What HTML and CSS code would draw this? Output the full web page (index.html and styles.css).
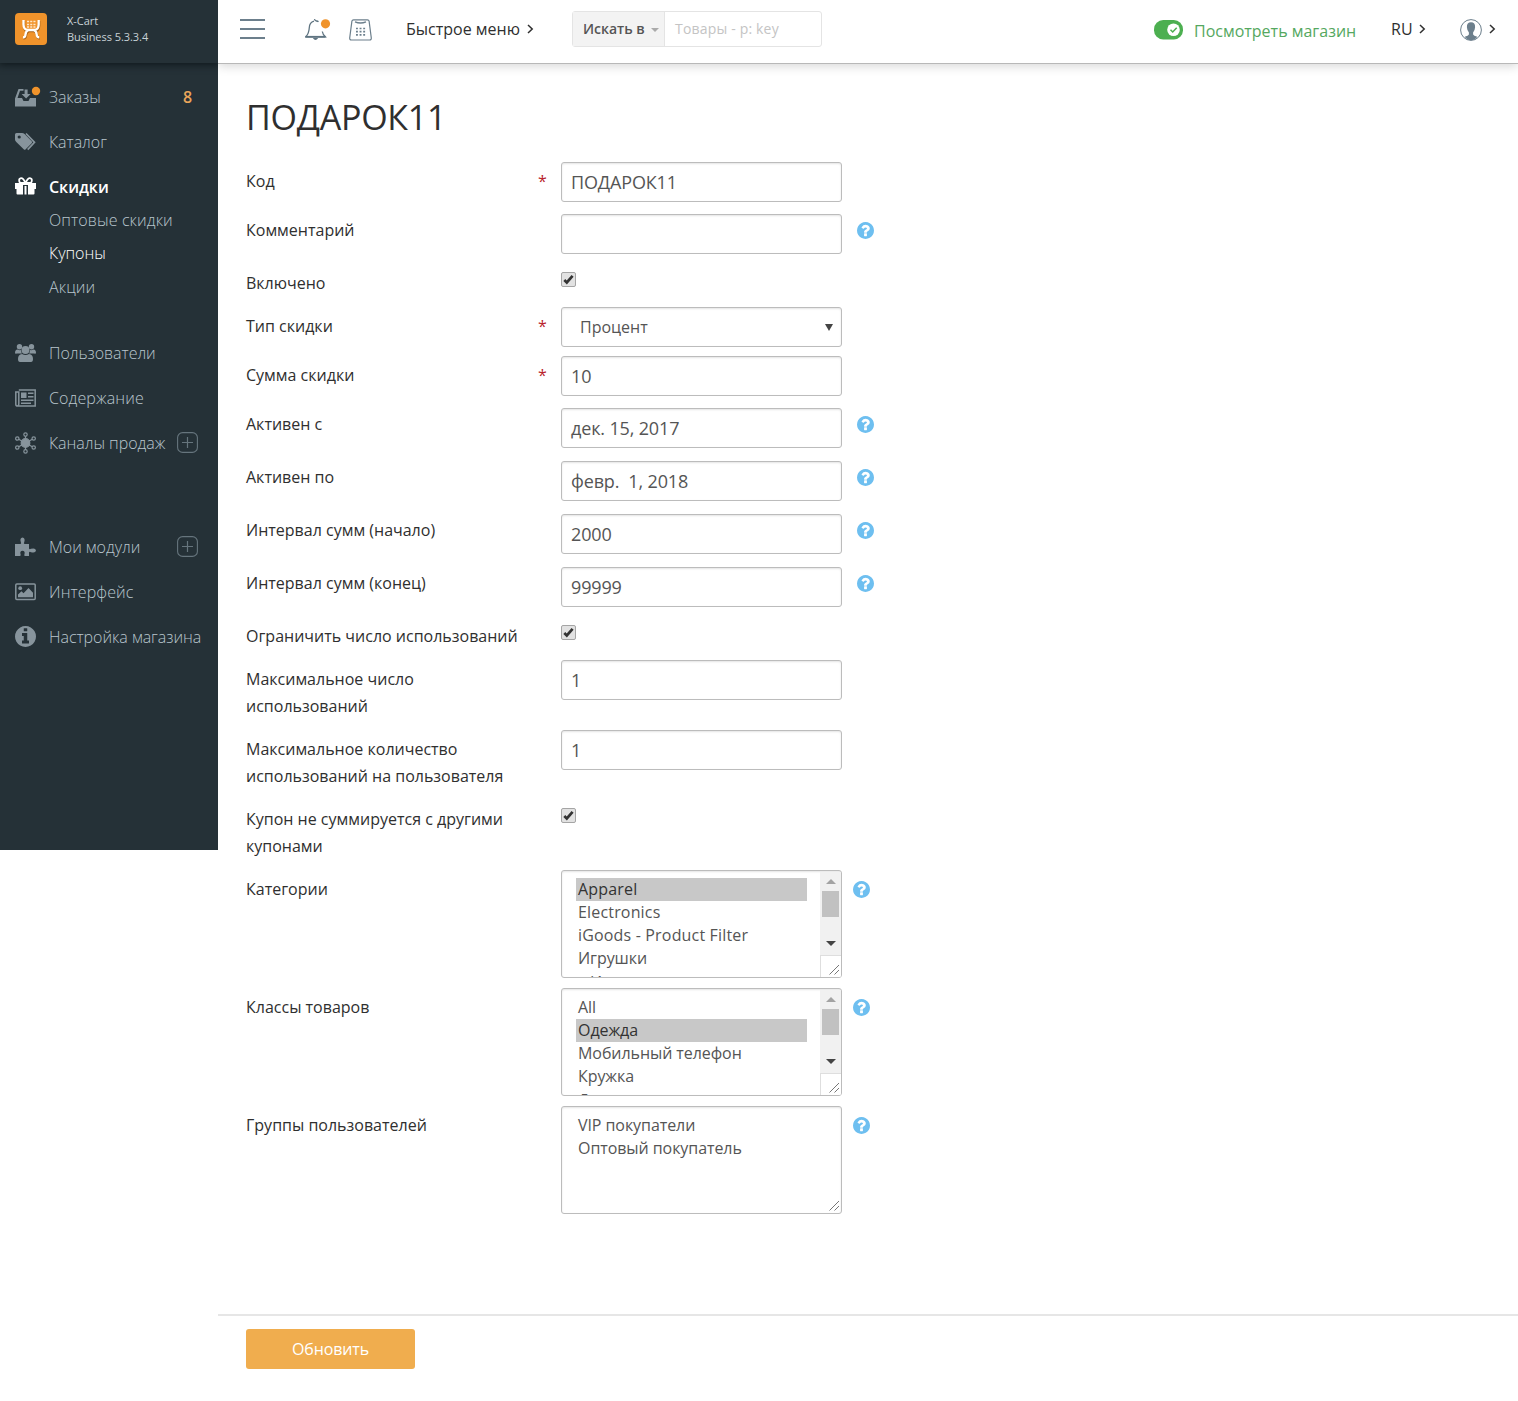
FILE: index.html
```html
<!DOCTYPE html>
<html lang="ru">
<head>
<meta charset="utf-8">
<title>ПОДАРОК11</title>
<link rel="stylesheet" href="styles.css">
</head>
<body>
<svg class="sprite" width="0" height="0">
  <symbol id="help" viewBox="128 128 1536 1536"><path fill="currentColor" d="M1024 1376v-192q0-14-9-23t-23-9h-192q-14 0-23 9t-9 23v192q0 14 9 23t23 9h192q14 0 23-9t9-23zm256-672q0-88-55.500-163t-138.500-116-170-41q-243 0-371 213-15 24 8 42l132 100q7 6 19 6 16 0 25-12 53-68 86-92 34-24 86-24 48 0 85.500 26t37.500 59q0 38-20 61t-68 45q-63 28-115.500 86.500t-52.500 125.500v36q0 14 9 23t23 9h192q14 0 23-9t9-23q0-19 21.500-49.500t54.500-49.500q32-18 49-28.500t46-35 44.500-48 28-60.500 12.500-81zm384 192q0 209-103 385.500t-279.500 279.500-385.500 103-385.500-103-279.500-279.500-103-385.500 103-385.500 279.500-279.500 385.500-103 385.500 103 279.500 279.500 103 385.500z"/></symbol>
  <symbol id="plus" viewBox="0 0 21 21"><rect x=".6" y=".6" width="19.800" height="19.800" rx="5" fill="none" stroke="currentColor" stroke-width="1.100"/><path d="M10.500 5v11M5 10.500h11" stroke="currentColor" stroke-width="1.200"/></symbol>
  <symbol id="chevron" viewBox="0 0 7 10"><path d="M1 1l4.200 4L1 9" fill="none" stroke="currentColor" stroke-width="1.500"/></symbol>
  <symbol id="check" viewBox="0 0 13 13"><path d="M2.300 7L4.800 9.500L10.600 2.800" fill="none" stroke="#333" stroke-width="2.700"/></symbol>
  <symbol id="grip" viewBox="0 0 11 11"><path d="M.5 10.500L10 1M5.500 10.500L10 6" stroke="#777" stroke-width="1" fill="none"/></symbol>
  <symbol id="cart" viewBox="0 0 32 32"><path d="M8.500 7v4.500Q8.700 16.800 12.500 17h7.200q3.800-.2 4-5.500V7M8 24.200q2.300.3 2.500-2.700.3-3.500 3-4.500h5.200q2.700 1 3 4.500.2 3 2.500 2.700" fill="none" stroke="currentColor" stroke-width="2.300"/></symbol>
</svg>
<div class="app">
  <aside class="sidebar">
    <div class="brand">
      <svg class="brand-logo" viewBox="0 0 32 32"><rect width="32" height="32" rx="4" fill="#f0932b"/><use href="#cart" x=".5" y="1.100" width="32" height="32" color="#a8651c"/><use href="#cart" width="32" height="32" color="#fff"/><path d="M12 8.500h8.500M12 11.500h8.500M12 14h8.500" stroke="#ffe6c8" stroke-width="1.700" stroke-dasharray="2.100 1.100"/></svg>
      <div class="brand-text">X-Cart<br>Business 5.3.3.4</div>
    </div>
    <ul class="menu">
      <li class="item"><svg class="icon" viewBox="0 0 26 22"><path fill="currentColor" d="M0 12.500L3.500 3h5v1.800H5L2.500 12H7l1.500 3h5l1.500-3h6v8.500H0zM9.600 3.500h3V8h3l-4.500 4.500L6.600 8h3z"/><circle cx="21" cy="5" r="4.200" fill="#f0932b"/></svg><span class="name">Заказы</span><b class="count">8</b></li>
      <li class="item"><svg class="icon" viewBox="0 0 26 22"><path fill="currentColor" d="M0 3.500Q0 2 1.500 2H7q1.500 0 2.600 1l7.100 7.200q1 1 0 2l-6 6q-1 1-2 0L1.300 11Q0 9.800 0 8.500z"/><path d="M11 2.500l8.500 8.800-6.800 7.400" fill="none" stroke="currentColor" stroke-width="1.700"/><circle cx="4.200" cy="6" r="1.600" fill="#253137"/></svg><span class="name">Каталог</span></li>
      <li class="item active"><svg class="icon" viewBox="0 0 26 22"><path fill="currentColor" d="M0 7h21v6h-1.500v4.500q0 1-1 1H13V9H8v9.500H2.500q-1 0-1-1V13H0zM9.500 10h2v8.500h-2z"/><path d="M10.500 7Q8 1.500 5.500 2.300T5 7h11Q18 3 15.500 2.300T10.500 7z" fill="none" stroke="currentColor" stroke-width="1.800"/></svg><span class="name">Скидки</span></li>
      <li class="sub wide"><span>Оптовые скидки</span></li>
      <li class="sub current"><span>Купоны</span></li>
      <li class="sub wide"><span>Акции</span></li>
      <li class="item after-sub"><svg class="icon" viewBox="0 0 26 22"><g fill="currentColor"><circle cx="10.500" cy="8" r="4"/><circle cx="4.500" cy="4.800" r="2.700"/><circle cx="16.500" cy="4.800" r="2.700"/><path d="M3 17q0-4.500 4-5 3.500 2 7 0 4 .5 4 5 0 3-2 3H5q-2 0-2-3zM0 11q0-3.300 2.500-3.500 2 1 3.500.5 0 2 1 3.500H2Q0 12 0 11zM21 11q0-3.300-2.500-3.500-2 1-3.500.5 0 2-1 3.500h5q2 .5 2-.5z"/></g></svg><span class="name">Пользователи</span></li>
      <li class="item"><svg class="icon" viewBox="0 0 26 22"><path d="M3.800 3h16.400v16H2.500Q.8 19 .8 17.500V5h3v12q0 1.500-1 2" fill="none" stroke="currentColor" stroke-width="1.500"/><path fill="currentColor" d="M6 5.500h5.500V11H6zM13 5.500h5.500V7H13zM13 9h5.500v1.500H13zM6 12.500h12.500V14H6zM6 15.500h10V17H6z"/></svg><span class="name wide">Содержание</span></li>
      <li class="item"><svg class="icon" viewBox="0 0 26 22"><g stroke="currentColor" stroke-width="1.200" fill="none"><path d="M10.500 3v16M2.300 6.500l16.400 9M18.700 6.500l-16.400 9"/><circle cx="10.500" cy="11" r="4.300" fill="currentColor"/><g fill="#253137"><circle cx="10.500" cy="2.600" r="1.700"/><circle cx="10.500" cy="19.400" r="1.700"/><circle cx="2.300" cy="6.500" r="1.700"/><circle cx="18.700" cy="6.500" r="1.700"/><circle cx="2.300" cy="15.500" r="1.700"/><circle cx="18.700" cy="15.500" r="1.700"/></g></g></svg><span class="name">Каналы продаж</span><svg class="plus"><use href="#plus"/></svg></li>
      <li class="item second-group"><svg class="icon" viewBox="0 0 26 22"><path fill="currentColor" d="M0 8h5.500q1.200-.3.300-2Q4.500 2 7.500 1.500 10.500 2 9.300 6q-1 1.700.2 2H14v4.500q.5 1.200 2 .3Q20.500 11.500 21 14.500q-.5 3-5 1.700-1.500-1-2 .3V20H9.800q-1-.4-.3-2 .8-3-2-3.300Q4.600 15 5.500 18q.8 1.600-.5 2H0z"/></svg><span class="name">Мои модули</span><svg class="plus"><use href="#plus"/></svg></li>
      <li class="item"><svg class="icon" viewBox="0 0 26 22"><rect x=".8" y="3" width="19.400" height="15.500" rx="1" fill="none" stroke="currentColor" stroke-width="1.500"/><circle cx="5.200" cy="7.200" r="1.900" fill="currentColor"/><path fill="currentColor" d="M3 16.200v-2.700l3.500-3.300 2 2L13.500 7l4.500 4.700v4.500z"/></svg><span class="name wide">Интерфейс</span></li>
      <li class="item"><svg class="icon info" viewBox="128 128 1536 1536"><path fill="currentColor" d="M1152 1376v-160q0-14-9-23t-23-9h-96v-512q0-14-9-23t-23-9h-320q-14 0-23 9t-9 23v160q0 14 9 23t23 9h96v320h-96q-14 0-23 9t-9 23v160q0 14 9 23t23 9h448q14 0 23-9t9-23zm-128-896v-160q0-14-9-23t-23-9h-192q-14 0-23 9t-9 23v160q0 14 9 23t23 9h192q14 0 23-9t9-23zm640 416q0 209-103 385.500t-279.500 279.500-385.500 103-385.500-103-279.500-279.500-103-385.500 103-385.500 279.500-279.500 385.500-103 385.500 103 279.500 279.500 103 385.500z"/></svg><span class="name">Настройка магазина</span></li>
    </ul>
  </aside>
  <div class="page">
    <header class="topbar">
      <svg class="burger" viewBox="0 0 25 20"><path d="M0 1h25M0 10h25M0 19h25" stroke="#6c7f8c" stroke-width="2"/></svg>
      <svg class="bell" viewBox="0 0 26 24"><path d="M9 3.200Q4.500 4.500 4.300 9.500 4 15.500.8 18.800h19.500Q17.800 16.500 17.300 13.500M9.500 1q.2 1.800 2 2 1.300.2 2 .8" fill="none" stroke="#5f7481" stroke-width="1.300"/><path d="M.5 18.800h20" stroke="#5f7481" stroke-width="1.800"/><path d="M7.800 20q2.700 4 5.400 0z" fill="#5f7481"/><circle cx="20.500" cy="5.800" r="4.600" fill="#f0932b"/></svg>
      <svg class="register" viewBox="0 0 23 22"><path d="M4.500.8h14q1.300 0 1.600 1.300l2.200 16.900q.1 2-1.700 2H2.400q-1.800 0-1.700-2L2.900 2.100Q3.200.8 4.500.8z" fill="none" stroke="#6c7f8c" stroke-width="1.200"/><path d="M6 2.800q5.500 2.400 11 0" fill="none" stroke="#6c7f8c" stroke-width="1.300"/><path d="M7 9.500h9.500M7 12.700h9.500M7 15.900h9.500" stroke="#6c7f8c" stroke-width="1.700" stroke-dasharray="1.900 1.700"/></svg>
      <span class="quick">Быстрое меню</span><svg class="chev"><use href="#chevron"/></svg>
      <div class="search"><div class="scope"><span>Искать в</span><i class="caret"></i></div><span class="placeholder">Товары - p: key</span></div>
      <svg class="toggle" viewBox="0 0 29 20"><rect width="29" height="19.500" rx="9.200" fill="#4caf50"/><circle cx="19.500" cy="9.800" r="6.300" fill="#fff"/><path d="M16.500 9.800l2.200 2.200 4-4.200" fill="none" stroke="#4caf50" stroke-width="1.500"/></svg>
      <span class="store">Посмотреть магазин</span>
      <span class="lang">RU</span><svg class="chev"><use href="#chevron"/></svg>
      <svg class="avatar" viewBox="0 0 22 22"><circle cx="11" cy="11" r="10.400" fill="#fff" stroke="#6c7f8c"/><path d="M11 3.300q4.300 0 4.100 5-.2 3.300-2 5.200v2q.5 1.300 4.200 2.200-2.500 3.600-6.300 3.600t-6.300-3.600Q8.400 16.800 8.900 15.500v-2Q7.100 11.600 6.900 8.300q-.2-5 4.100-5z" fill="#6c7f8c"/></svg><svg class="chev"><use href="#chevron"/></svg>
    </header>
    <main class="content">
      <h1><span>ПОДАРОК11</span></h1>
      <form class="form">
        <div class="row"><label>Код</label><b class="req">*</b><div class="field"><span>ПОДАРОК11</span></div></div>
        <div class="row with-help"><label>Комментарий</label><b class="req"></b><div class="field"></div><svg class="help"><use href="#help"/></svg></div>
        <div class="row flag"><label>Включено</label><b class="req"></b><svg class="box"><use href="#check"/></svg></div>
        <div class="row"><label>Тип скидки</label><b class="req">*</b><div class="field select"><span>Процент</span><i class="drop"></i></div></div>
        <div class="row"><label>Сумма скидки</label><b class="req">*</b><div class="field"><span>10</span></div></div>
        <div class="row with-help"><label>Активен с</label><b class="req"></b><div class="field"><span>дек. 15, 2017</span></div><svg class="help"><use href="#help"/></svg></div>
        <div class="row with-help"><label>Активен по</label><b class="req"></b><div class="field"><span>февр. &nbsp;1, 2018</span></div><svg class="help"><use href="#help"/></svg></div>
        <div class="row with-help"><label>Интервал сумм (начало)</label><b class="req"></b><div class="field"><span>2000</span></div><svg class="help"><use href="#help"/></svg></div>
        <div class="row with-help"><label>Интервал сумм (конец)</label><b class="req"></b><div class="field"><span>99999</span></div><svg class="help"><use href="#help"/></svg></div>
        <div class="row flag"><label>Ограничить число использований</label><b class="req"></b><svg class="box"><use href="#check"/></svg></div>
        <div class="row tall"><label>Максимальное число<br>использований</label><b class="req"></b><div class="field"><span>1</span></div></div>
        <div class="row tall"><label>Максимальное количество<br>использований на пользователя</label><b class="req"></b><div class="field"><span>1</span></div></div>
        <div class="row tall"><label>Купон не суммируется с другими<br>купонами</label><b class="req"></b><svg class="box"><use href="#check"/></svg></div>
        <div class="row multi"><label>Категории</label><b class="req"></b>
          <div class="list"><ul><li class="on latin">Apparel</li><li class="latin">Electronics</li><li class="latin">iGoods - Product Filter</li><li>Игрушки</li><li class="nested">Игры</li></ul><div class="scroll"><i class="up"></i><i class="thumb"></i><i class="down"></i><div class="corner"><svg class="grip"><use href="#grip"/></svg></div></div></div>
          <svg class="help"><use href="#help"/></svg></div>
        <div class="row multi"><label>Классы товаров</label><b class="req"></b>
          <div class="list"><ul><li>All</li><li class="on">Одежда</li><li>Мобильный телефон</li><li>Кружка</li><li class="partial">Другое</li></ul><div class="scroll"><i class="up"></i><i class="thumb"></i><i class="down"></i><div class="corner"><svg class="grip"><use href="#grip"/></svg></div></div></div>
          <svg class="help"><use href="#help"/></svg></div>
        <div class="row multi"><label>Группы пользователей</label><b class="req"></b>
          <div class="list"><ul><li>VIP покупатели</li><li>Оптовый покупатель</li></ul><div class="scroll empty"><div class="corner"><svg class="grip"><use href="#grip"/></svg></div></div></div>
          <svg class="help"><use href="#help"/></svg></div>
      </form>
    </main>
    <footer class="actions"><button type="button" class="submit">Обновить</button></footer>
  </div>
</div>
</body>
</html>
```
FILE: styles.css
```css
* { box-sizing: border-box; }
body { margin: 0; background: #fff; color: #2f2f2f; font-family: "Open Sans", "Noto Sans", sans-serif; font-size: 16px; }
svg { display: block; flex: none; }
ul { list-style: none; margin: 0; padding: 0; }
.sprite { position: absolute; }
.app { display: flex; align-items: flex-start; height: 1401px; overflow: hidden; }

/* Sidebar */
.sidebar { flex: none; width: 218px; height: 850px; background: #253137; color: #b9c6cd; }
.brand { display: flex; height: 63px; padding: 13px 0 0 15px; box-shadow: 0 1px 7px 1px #10191d; clip-path: inset(0 0 -14px 0); }
.brand-logo { width: 32px; height: 32px; }
.brand-text { margin-left: 20px; font-size: 11px; line-height: 16px; letter-spacing: -.05px; color: #c8d1d6; }
.menu { padding-top: 11px; }
.item { display: flex; align-items: center; height: 45px; padding-left: 15px; font-weight: 300; letter-spacing: -.03px; white-space: nowrap; }
.icon { width: 26px; height: 22px; margin-right: 8px; color: #87949c; overflow: visible; }
.icon.info { width: 21px; height: 21px; margin-right: 13px; }
.name { width: 118px; }
.wide { letter-spacing: .12px; }
.count { margin-left: 16px; color: #e9a55a; font-weight: 600; }
.plus { width: 21px; height: 21px; margin-left: 10px; color: #66757d; }
.active { color: #fff; font-weight: 600; }
.active .icon { color: #fff; }
.sub { height: 33.400px; padding: 1px 0 0 49px; line-height: 21px; font-weight: 300; }
.current { color: #fff; }
.after-sub { margin-top: 21px; }
.second-group { margin-top: 59px; }

/* Top bar */
.page { flex: 1; }
.topbar { display: flex; align-items: center; height: 64px; padding: 0 0 5px 22px; border-bottom: 1px solid #b8b8b8; box-shadow: 0 2px 10px #d6d6d6; clip-path: inset(0 0 -14px 0); white-space: nowrap; }
.burger { width: 25px; height: 20px; }
.bell { width: 26px; height: 24px; margin: 2px 0 0 40px; }
.register { width: 23px; height: 22px; margin: 2px 0 0 18px; }
.quick { width: 121px; margin-left: 34px; }
.chev { width: 7px; height: 10px; }
.search { display: flex; width: 250px; height: 36px; margin-left: 38px; border: 1px solid #e4e4e4; border-radius: 3px; font-size: 14px; line-height: 34px; }
.scope { display: flex; align-items: center; width: 92px; padding-left: 10px; background: #f3f3f3; border-right: 1px solid #e4e4e4; color: #555; font-weight: 600; }
.caret { margin: 2px 0 0 6px; border: 4px solid transparent; border-top-color: #aaa; border-bottom: 0; }
.placeholder { padding-left: 10px; letter-spacing: .18px; color: #c4c4c4; }
.toggle { width: 29px; height: 20px; margin: 2px 0 0 332px; }
.store { width: 197px; margin-left: 11px; padding-top: 4px; color: #55a860; }
.lang { width: 28px; }
.avatar { width: 22px; height: 22px; margin: 2px 7px 0 34px; }

/* Form */
.content { height: 1250px; padding: 28px 0 0 28px; }
h1 { height: 70px; margin: 0; font-size: 34px; line-height: 50px; font-weight: 400; letter-spacing: -.25px; }
.row { display: flex; height: 49px; }
.with-help { height: 53px; }
.flag { height: 43px; }
.tall { height: 70px; }
.multi { height: 118px; }
.row label { width: 292px; padding-top: 6px; line-height: 27px; white-space: nowrap; }
.req { width: 23px; padding-top: 7px; font-weight: 400; line-height: 24px; color: #b9242b; }
.field { display: flex; align-items: center; width: 281px; height: 40px; padding-left: 9px; border: 1px solid #bcbcbc; border-radius: 3px; box-shadow: inset 0 1px 2px #e4e4e4; color: #555; font-size: 18px; letter-spacing: -.15px; }
.with-help .field { margin-top: 3px; }
.select { justify-content: space-between; padding: 0 8px 0 18px; font-size: 16px; letter-spacing: 0; }
.drop { border: 4px solid transparent; border-top: 7px solid #444; border-bottom: 0; }
.box { width: 15px; height: 15px; margin-top: 8px; border: 1px solid #a5a5a5; border-radius: 2px; background: #e2e2e2; }
.help { width: 17px; height: 17px; margin: 11px 0 0 15px; color: #6ebff0; }
.multi .help { margin-left: 11px; }
.list { display: flex; width: 281px; height: 108px; border: 1px solid #bcbcbc; border-radius: 3px; box-shadow: inset 0 1px 2px #e4e4e4; overflow: hidden; color: #555; }
.list ul { width: 245px; padding: 7px 0 0 14px; }
.list li { height: 23px; padding-left: 2px; line-height: 22px; letter-spacing: -.07px; white-space: nowrap; }
.list .latin { letter-spacing: .17px; }
.list .on { background: #c8c8c8; color: #333; }
.list .nested { padding-left: 14px; line-height: 25px; }
.list .partial { line-height: 25px; }
.scroll { display: flex; flex-direction: column; align-items: center; width: 21px; margin: 1px 0 0 13px; background: #f1f1f1; }
.scroll.empty { background: none; }
.up, .down { border: 5px solid transparent; }
.up { margin-top: 7px; border-bottom-color: #a3a3a3; border-top: 0; }
.thumb { width: 17px; height: 26px; margin-top: 7px; background: #c1c1c1; }
.down { margin-top: 24px; border-top-color: #444; border-bottom: 0; }
.corner { display: flex; justify-content: flex-end; align-items: flex-end; width: 21px; height: 22px; margin-top: auto; padding: 0 1px 2px 0; background: #fff; border: 1px solid #dedede; border-width: 1px 0 0 1px; }
.empty .corner { border-color: transparent; background: none; }
.grip { width: 11px; height: 11px; }

/* Footer */
.actions { height: 87px; padding: 13px 0 0 28px; border-top: 2px solid #e6e6e6; }
.submit { display: block; width: 169px; height: 40px; padding: 0; border: 0; border-radius: 3px; background: #f0ad4e; color: #fff; font: 16px "Open Sans", "Noto Sans", sans-serif; letter-spacing: -.1px; }
```
